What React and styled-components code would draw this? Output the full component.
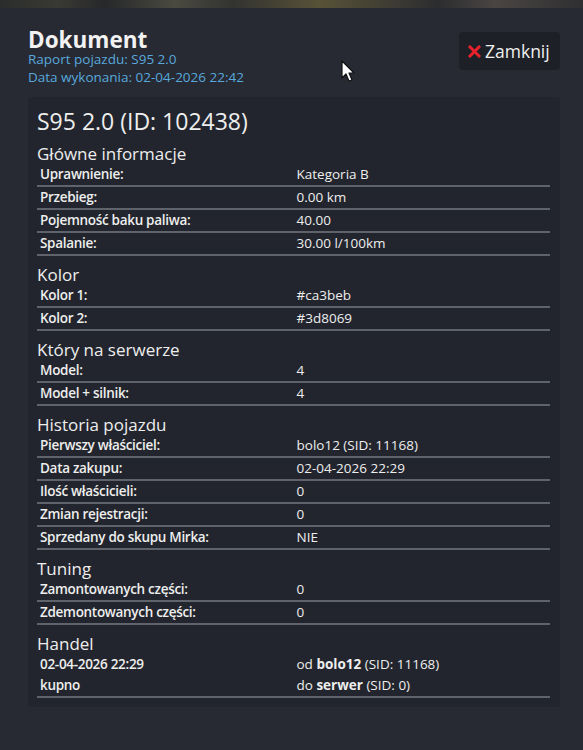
import styled, { createGlobalStyle } from "styled-components";

const Global = createGlobalStyle`
  html, body {
    margin: 0;
    padding: 0;
    background: #272a33;
    font-family: "Open Sans", "Liberation Sans", sans-serif;
  }
`;

const Strip = styled.div`
  height: 8px;
  background: linear-gradient(90deg, #2b2d2c 0%, #3a3a34 10%, #26282a 18%, #4a4a40 30%, #333331 40%, #575237 55%, #3c3a33 68%, #2c2d2f 75%, #4a4543 85%, #2f2f31 100%);
`;

const Modal = styled.div`
  position: relative;
  background: #272a33;
  min-height: 742px;
  padding: 22px 23px 0 28px;
  box-sizing: border-box;
`;

const Header = styled.header`
  display: flex;
  justify-content: space-between;
  align-items: flex-start;
`;

const TitleBlock = styled.div`
  display: flex;
  flex-direction: column;
`;

const DocTitle = styled.h1`
  margin: 0;
  font-size: 22.5px;
  line-height: 20px;
  font-weight: 700;
  color: #f2f2f2;
`;

const SubLine = styled.div`
  font-size: 13.5px;
  line-height: 18px;
  color: #58a8dc;
`;

const CloseButton = styled.button`
  display: flex;
  align-items: center;
  gap: 4px;
  margin-top: 2px;
  height: 38px;
  width: 101px;
  padding: 0 0 0 9px;
  border: none;
  border-radius: 4px;
  background: #1e2027;
  color: #f0f0f0;
  font-family: inherit;
  font-size: 17.5px;
  cursor: pointer;
`;

const Panel = styled.section`
  margin-top: 11px;
  width: 532px;
  box-sizing: border-box;
  background: #22252d;
  border-radius: 4px;
  padding: 10px 10px 9px 9px;
  color: #eeeeee;
`;

const VehicleTitle = styled.h2`
  margin: 0;
  font-size: 23px;
  line-height: 28px;
  font-weight: 400;
`;

const SectionTitle = styled.h3`
  margin: 9px 0 0;
  font-size: 17px;
  line-height: 20px;
  font-weight: 400;
`;

const Row = styled.div`
  display: grid;
  grid-template-columns: 1fr 1fr;
  border-bottom: 2px solid #5f636b;
  font-size: 13.5px;
  line-height: 21px;
  width: 513px;
`;

const Label = styled.div`
  padding-left: 3px;
  font-weight: 600;
  letter-spacing: -0.3px;
`;

const Value = styled.div`
  padding-left: 3px;
  font-weight: 400;
`;

const Strong = styled.b`
  font-weight: 700;
`;

const Cursor = styled.svg`
  position: absolute;
  left: 341px;
  top: 52px;
`;

const sections = [
  {
    title: "Główne informacje",
    rows: [
      ["Uprawnienie:", "Kategoria B"],
      ["Przebieg:", "0.00 km"],
      ["Pojemność baku paliwa:", "40.00"],
      ["Spalanie:", "30.00 l/100km"],
    ],
  },
  {
    title: "Kolor",
    rows: [
      ["Kolor 1:", "#ca3beb"],
      ["Kolor 2:", "#3d8069"],
    ],
  },
  {
    title: "Który na serwerze",
    rows: [
      ["Model:", "4"],
      ["Model + silnik:", "4"],
    ],
  },
  {
    title: "Historia pojazdu",
    rows: [
      ["Pierwszy właściciel:", "bolo12 (SID: 11168)"],
      ["Data zakupu:", "02-04-2026 22:29"],
      ["Ilość właścicieli:", "0"],
      ["Zmian rejestracji:", "0"],
      ["Sprzedany do skupu Mirka:", "NIE"],
    ],
  },
  {
    title: "Tuning",
    rows: [
      ["Zamontowanych części:", "0"],
      ["Zdemontowanych części:", "0"],
    ],
  },
];

export default function App() {
  return (
    <>
      <Global />
      <Strip />
      <Modal>
        <Header>
          <TitleBlock>
            <DocTitle>Dokument</DocTitle>
            <SubLine>Raport pojazdu: S95 2.0</SubLine>
            <SubLine>Data wykonania: 02-04-2026 22:42</SubLine>
          </TitleBlock>
          <CloseButton>
            <svg width="13" height="13" viewBox="0 0 13 13">
              <path d="M2 2 L11 11 M11 2 L2 11" stroke="#e8222c" strokeWidth="3" strokeLinecap="square" />
            </svg>
            Zamknij
          </CloseButton>
        </Header>

        <Panel>
          <VehicleTitle>S95 2.0 (ID: 102438)</VehicleTitle>
          {sections.map((s) => (
            <div key={s.title}>
              <SectionTitle>{s.title}</SectionTitle>
              {s.rows.map(([l, v]) => (
                <Row key={l}>
                  <Label>{l}</Label>
                  <Value>{v}</Value>
                </Row>
              ))}
            </div>
          ))}
          <SectionTitle>Handel</SectionTitle>
          <Row>
            <Label>
              02-04-2026 22:29
              <br />
              kupno
            </Label>
            <Value>
              od <Strong>bolo12</Strong> (SID: 11168)
              <br />
              do <Strong>serwer</Strong> (SID: 0)
            </Value>
          </Row>
        </Panel>

        <Cursor width="16" height="24" viewBox="0 0 16 24">
          <path d="M1 1 L1 18 L5 14 L8 21 L11 20 L8 13 L13 13 Z" fill="#ffffff" stroke="#111" strokeWidth="1.2" strokeLinejoin="round" />
        </Cursor>
      </Modal>
    </>
  );
}
